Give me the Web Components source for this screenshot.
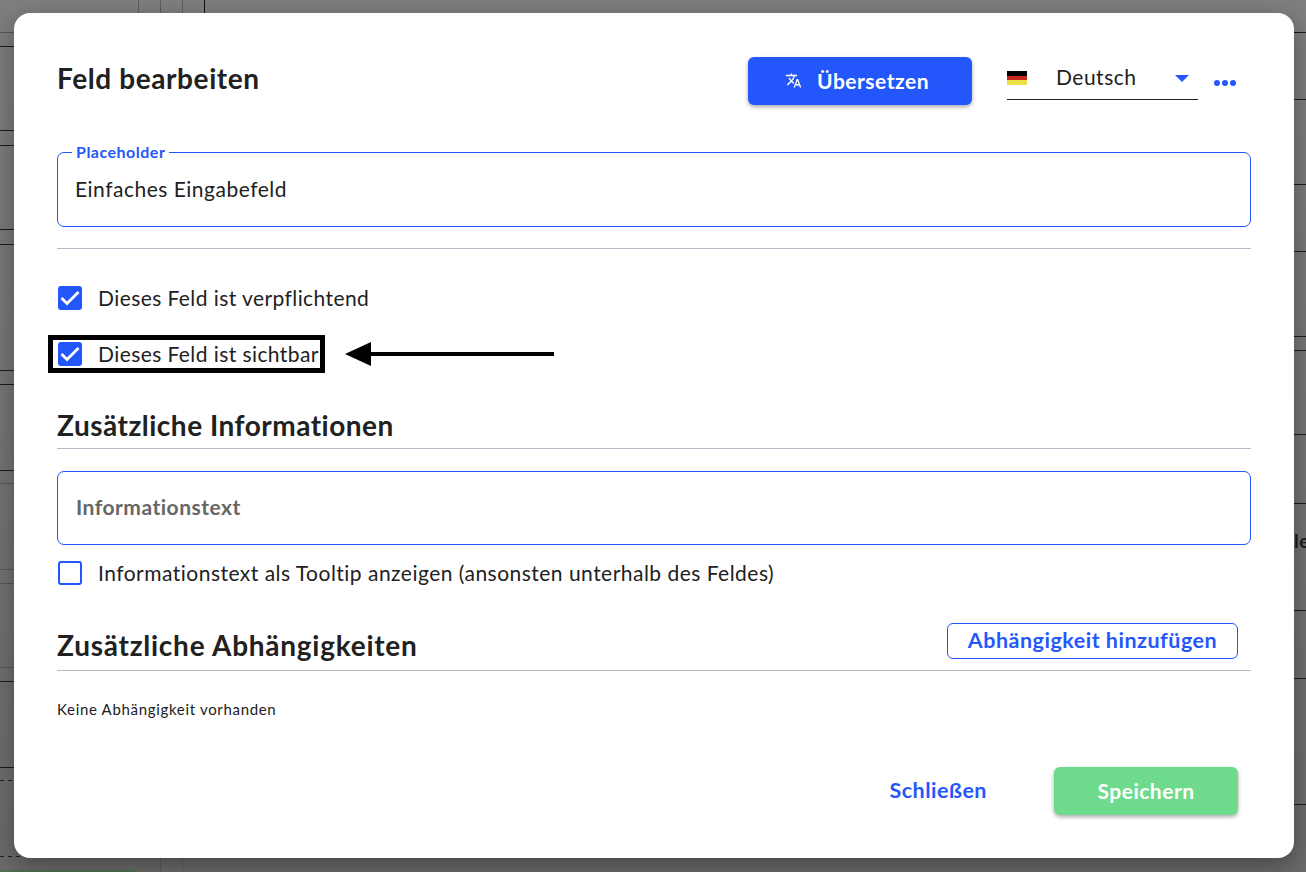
<!DOCTYPE html>
<html lang="de">
<head>
<meta charset="utf-8">
<title>Feld bearbeiten</title>
<style>
  html, body { margin: 0; height: 100%; }
  body { font-family: Lato, "Noto Sans", sans-serif; letter-spacing: .5px; color: #212121; overflow: hidden; }
</style>
</head>
<body>
<template id="backdrop-tpl">
  <style>
    :host { display: block; position: relative; width: 1306px; height: 872px; overflow: hidden; background: linear-gradient(#7e7e7e, #6a6a6a); }
    .line { position: absolute; background: #1c1c1c; height: 1px; }
    .line.soft { background: #565656; }
    .line.dash { background: repeating-linear-gradient(90deg, #222 0 4px, transparent 4px 8px); }
    .vline { position: absolute; top: 0; width: 1px; background: #5c5c5c; }
    .strip { position: absolute; left: 0; top: 870px; width: 135px; height: 2px; background: #4f6f50; }
    .dialog { position: absolute; left: 14px; top: 13px; width: 1280px; height: 845px; }
    .le { position: absolute; left: 1294px; top: 529px; font: 700 19px Lato, sans-serif; color: #1c1c1c; }
  </style>
  <div class="vline" style="left:138px;height:13px"></div>
  <div class="vline" style="left:160px;height:13px"></div>
  <div class="vline" style="left:182px;height:13px"></div>
  <div class="vline" style="left:204px;height:13px;background:#111"></div>
  <div class="vline" style="left:160px;top:858px;height:14px"></div>
  <div class="vline" style="left:182px;top:858px;height:14px"></div>
  <div class="line soft" style="left:0;top:32px;width:14px"></div>
  <div class="line" style="left:0;top:46px;width:14px"></div>
  <div class="line" style="left:0;top:130px;width:14px"></div>
  <div class="line" style="left:0;top:145px;width:14px"></div>
  <div class="line" style="left:0;top:229px;width:14px"></div>
  <div class="line" style="left:0;top:244px;width:14px"></div>
  <div class="line" style="left:0;top:370px;width:14px"></div>
  <div class="line" style="left:0;top:384px;width:14px"></div>
  <div class="line" style="left:0;top:470px;width:14px"></div>
  <div class="line soft" style="left:0;top:483px;width:14px"></div>
  <div class="line soft" style="left:0;top:569px;width:14px"></div>
  <div class="line soft" style="left:0;top:583px;width:14px"></div>
  <div class="line soft" style="left:0;top:667px;width:14px"></div>
  <div class="line" style="left:0;top:681px;width:14px"></div>
  <div class="line" style="left:0;top:767px;width:14px"></div>
  <div class="line dash" style="left:0;top:780px;width:14px"></div>
  <div class="line dash" style="left:0;top:856px;width:24px"></div>
  <div class="line" style="left:1294px;top:32px;width:12px"></div>
  <div class="line" style="left:1294px;top:99px;width:12px"></div>
  <div class="line" style="left:1294px;top:184px;width:12px"></div>
  <div class="line" style="left:1294px;top:251px;width:12px"></div>
  <div class="line" style="left:1294px;top:336px;width:12px"></div>
  <div class="line" style="left:1294px;top:350px;width:12px"></div>
  <div class="line" style="left:1294px;top:434px;width:12px"></div>
  <div class="line" style="left:1294px;top:503px;width:12px"></div>
  <div class="line" style="left:1294px;top:610px;width:12px"></div>
  <div class="line" style="left:1294px;top:678px;width:12px"></div>
  <div class="line" style="left:1294px;top:804px;width:12px"></div>
  <span class="le">le</span>
  <div class="strip"></div>
  <div class="dialog"><slot></slot></div>
</template>

<template id="dialog-tpl">
  <style>
    :host { display: flex; flex-direction: column; box-sizing: border-box; height: 845px; padding: 0 43px; background: #fff; border-radius: 16px; box-shadow: 0 8px 24px #0005; }
    header { display: flex; align-items: flex-start; height: 139px; box-sizing: border-box; padding-top: 44px; }
    h1 { margin: 0; flex: 1; font-size: 28px; letter-spacing: .6px; font-weight: 700; line-height: 32px; margin-top: 5px; }
    footer { display: flex; justify-content: flex-end; align-items: center; margin-top: 47px; padding-right: 13px; gap: 67px; }
  </style>
  <header><h1><slot name="title"></slot></h1><slot name="actions"></slot></header>
  <slot></slot>
  <footer><slot name="footer"></slot></footer>
</template>

<template id="btn-tpl">
  <style>
    :host { display: inline-flex; align-items: center; justify-content: center; box-sizing: border-box; padding-bottom: 2px; font-size: 21px; font-weight: 700; border-radius: 6px; white-space: nowrap; }
    :host([variant=primary]) { width: 224px; height: 48px; background: #2457fb; color: #fff; box-shadow: 0 2px 4px #0005; gap: 15px; padding-right: 6px; }
    :host([variant=success]) { width: 184px; height: 48px; background: #6edb8c; color: #fff; box-shadow: 0 2px 4px #0005; }
    :host([variant=outline]) { width: 291px; height: 36px; background: #fff; color: #2457fb; border: 1px solid #2457fb; font-size: 21.5px; }
    :host([variant=text]) { color: #2457fb; font-size: 21.5px; }
  </style>
  <slot name="icon"></slot><slot></slot>
</template>

<template id="lang-tpl">
  <style>
    :host { display: flex; align-items: center; margin: 0 0 0 35px; }
    .sel { display: flex; align-items: center; box-sizing: border-box; width: 191px; height: 43px; border-bottom: 1px solid #212121; font-size: 21px; }
    .flag { width: 20px; height: 14px; margin-right: 29px; background: linear-gradient(#000 0 33%, #c8281e 33% 66%, #ecdf47 66%); }
    .name { flex: 1; padding-bottom: 3px; }
    .caret { width: 0; height: 0; border: 7.5px solid transparent; border-top-color: #2457fb; border-bottom: 0; margin-right: 9px; }
    .dots { display: flex; gap: 2px; margin: 9px 15px 0 16px; }
    .dots i { width: 6px; height: 6px; border-radius: 50%; background: #2457fb; }
  </style>
  <div class="sel"><span class="flag"></span><span class="name"><slot></slot></span><span class="caret"></span></div>
  <div class="dots"><i></i><i></i><i></i></div>
</template>

<template id="field-tpl">
  <style>
    :host { display: flex; align-items: center; position: relative; box-sizing: border-box; height: 75px; border: 1px solid #2457fb; border-radius: 7px; padding: 0 18px 2px 17px; font-size: 21px; }
    .legend { position: absolute; left: 14px; top: -11px; padding: 0 4px; background: #fff; font-size: 16px; font-weight: 700; line-height: 19px; color: #2457fb; }
    .legend:empty { display: none; }
    :host([hint]) { color: #666; font-weight: 700; padding: 0 18px 3px 18px; }
  </style>
  <span class="legend"></span><slot></slot>
</template>

<template id="check-tpl">
  <style>
    :host { display: flex; align-items: center; gap: 16px; height: 36px; font-size: 21px; letter-spacing: .42px; padding-left: 1px; }
    .box { flex: none; box-sizing: border-box; width: 24px; height: 24px; border-radius: 3px; border: 2px solid #2457fb; display: flex; align-items: center; justify-content: center; }
    :host([checked]) .box { background: #2457fb; }
    svg { display: none; margin: -2px; flex: none; }
    :host([checked]) svg { display: block; }
    .label { padding-bottom: 2px; }
  </style>
  <span class="box"><svg width="24" height="24" viewBox="0 0 24 24"><path d="M3.5 12l5.5 5.5L20.5 6" fill="none" stroke="#fff" stroke-width="2.8"/></svg></span>
  <span class="label"><slot></slot></span>
</template>

<template id="section-tpl">
  <style>
    :host { display: flex; align-items: flex-end; justify-content: space-between; border-bottom: 1px solid #b8bcc8; box-sizing: border-box; }
    h2 { margin: 0; font-size: 28px; font-weight: 700; line-height: 34px; padding-bottom: 6px; }
  </style>
  <h2><slot></slot></h2><slot name="action"></slot>
</template>

<script>
  // every element just clones its template into an open shadow root
  function plain(tag, tplId, setup) {
    customElements.define(tag, class extends HTMLElement {
      constructor() {
        super()
        this.attachShadow({ mode: 'open' })
        this.shadowRoot.appendChild(document.getElementById(tplId).content.cloneNode(true))
      }
      connectedCallback() {
        if (setup) setup(this)
      }
    })
  }
  plain('app-backdrop', 'backdrop-tpl')
  plain('edit-dialog', 'dialog-tpl')
  plain('ui-btn', 'btn-tpl')
  plain('lang-select', 'lang-tpl')
  plain('text-field', 'field-tpl', el => {
    el.shadowRoot.querySelector('.legend').textContent = el.getAttribute('label') || ''
  })
  plain('check-row', 'check-tpl')
  plain('section-head', 'section-tpl', el => {
    if (el.hasAttribute('raised')) el.shadowRoot.querySelector('h2').style.paddingBottom = '8px'
  })
</script>

<app-backdrop>
  <edit-dialog>
    <span slot="title">Feld bearbeiten</span>
    <ui-btn slot="actions" variant="primary">
      <svg slot="icon" width="17" height="17" viewBox="0 0 24 24" fill="#fff"><path d="M12.87 15.07l-2.54-2.51.03-.03A17.52 17.52 0 0 0 14.07 6H17V4h-7V2H8v2H1v2h11.17C11.5 7.92 10.44 9.75 9 11.35 8.07 10.32 7.3 9.19 6.69 8h-2c.73 1.63 1.73 3.17 2.98 4.56l-5.09 5.02L4 19l5-5 3.11 3.11.76-2.04zM18.5 10h-2L12 22h2l1.12-3h4.75L21 22h2l-4.5-12zm-2.62 7l1.62-4.33L19.12 17h-3.24z"/></svg>
      Übersetzen
    </ui-btn>
    <lang-select slot="actions">Deutsch</lang-select>

    <text-field label="Placeholder">Einfaches Eingabefeld</text-field>
    <div style="height:1px;background:#b8bcc8;margin:21px 0 31px"></div>

    <check-row checked>Dieses Feld ist verpflichtend</check-row>
    <div style="position:relative;margin-top:20px">
      <check-row checked>Dieses Feld ist sichtbar</check-row>
      <!-- annotation drawn over the form -->
      <div style="position:absolute;left:-9px;top:-1px;width:277px;height:38px;box-sizing:border-box;border:5px solid #000"></div>
      <svg style="position:absolute;left:288px;top:4px" width="210" height="28" viewBox="0 0 210 28"><path d="M0 14L26 2v10l183 0v4L26 16v10z" fill="#000"/></svg>
    </div>

    <section-head style="height:60px;margin-top:17px">Zusätzliche Informationen</section-head>
    <text-field hint style="height:74px;margin-top:22px">Informationstext</text-field>
    <check-row style="margin-top:10px;letter-spacing:.48px">Informationstext als Tooltip anzeigen (ansonsten unterhalb des Feldes)</check-row>

    <section-head raised style="height:80px;margin-top:0;letter-spacing:.75px">Zusätzliche Abhängigkeiten
      <ui-btn slot="action" variant="outline" style="margin:0 13px 11px 0;letter-spacing:.5px">Abhängigkeit hinzufügen</ui-btn>
    </section-head>
    <div style="font-size:15px;letter-spacing:.68px;line-height:20px;margin-top:28px;margin-bottom:1px">Keine Abhängigkeit vorhanden</div>

    <ui-btn slot="footer" variant="text">Schließen</ui-btn>
    <ui-btn slot="footer" variant="success">Speichern</ui-btn>
  </edit-dialog>
</app-backdrop>
</body>
</html>
